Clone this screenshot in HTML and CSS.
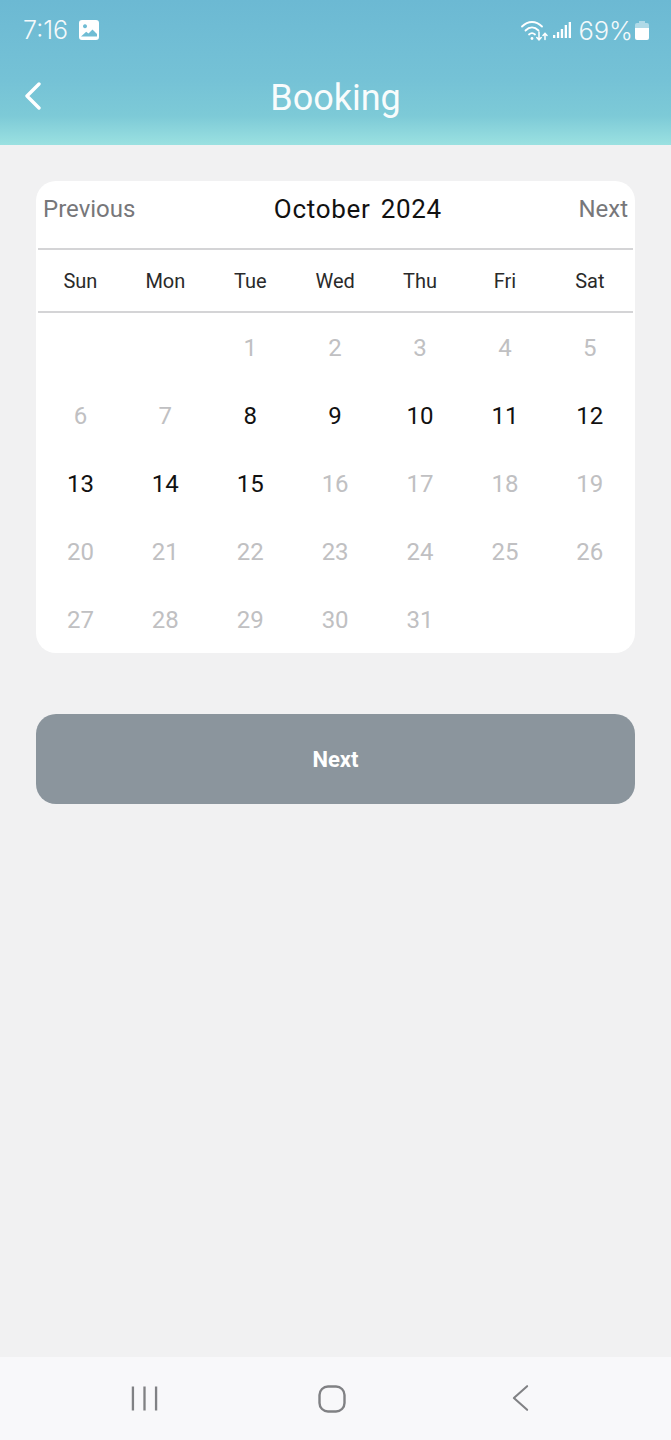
FILE: index.html
```html
<!DOCTYPE html>
<html lang="en">
<head>
<meta charset="utf-8">
<title>Booking</title>
<link rel="stylesheet" href="styles.css">
</head>
<body>
<div class="screen">
  <header class="app-header">
    <div class="status-bar">
      <div class="status-left">
        <span class="clock">7:16</span>
        <svg class="ic-photo" viewBox="0 0 20 20"><path fill="#fff" fill-rule="evenodd" d="M3 0h14a3 3 0 0 1 3 3v14a3 3 0 0 1-3 3H3a3 3 0 0 1-3-3V3a3 3 0 0 1 3-3zM6 4.200a2 2 0 1 0 .01 0zM2 16.500h16v-2.500l-4.500-4.500-4 4-2.300-1.800z"/></svg>
      </div>
      <div class="status-right">
        <svg class="ic-wifi" viewBox="0 0 28 21" fill="none" stroke="#fff" stroke-linecap="round"><path stroke-width="1.800" d="M1 6.500C7 .5 15 .5 21 6.500"/><path stroke-width="1.800" d="M4.500 10.500C8.500 6.500 13.500 6.500 17.500 10.500"/><path stroke-width="1.800" d="M8 14.500c2-1.800 4-1.800 6 0"/><circle cx="11" cy="18.500" r="1.400" fill="#fff" stroke="none"/><path stroke-width="1.500" d="M18 12v7.500M15.800 17.500l2.200 2.400 2.200-2.400M24 19.500v-6M22 15.500l2-2.200 2 2.200"/></svg>
        <svg class="ic-signal" viewBox="0 0 18 18" fill="#fff"><rect x="0" y="14" width="2.300" height="3"/><rect x="3.900" y="11" width="2.300" height="6"/><rect x="7.800" y="8" width="2.300" height="9"/><rect x="11.700" y="4" width="2.300" height="13"/><rect x="15.700" y="1" width="2.300" height="16"/></svg>
        <span class="battery-text">69%</span>
        <svg class="ic-battery" viewBox="0 0 14 19"><path fill="#fff" opacity=".45" d="M4 0h6v2h2a2 2 0 0 1 2 2v3H0V4a2 2 0 0 1 2-2h2z"/><path fill="#fff" d="M0 7h14v10a2 2 0 0 1-2 2H2a2 2 0 0 1-2-2z"/></svg>
      </div>
    </div>
    <div class="title-bar">
      <svg class="ic-back" viewBox="0 0 18 28" fill="none" stroke="#fff" stroke-width="3.400" stroke-linecap="round" stroke-linejoin="round"><path d="M15 2 3 14l12 12"/></svg>
      <h1 class="title">Booking</h1>
    </div>
  </header>

  <main class="content">
    <section class="calendar">
      <div class="cal-head">
        <span class="cal-link">Previous</span>
        <span class="cal-month">October 2024</span>
        <span class="cal-link">Next</span>
      </div>
      <div class="cal-grid cal-weekdays">
        <span>Sun</span><span>Mon</span><span>Tue</span><span>Wed</span><span>Thu</span><span>Fri</span><span>Sat</span>
      </div>
      <div class="cal-grid cal-days">
        <span></span><span></span><span class="off">1</span><span class="off">2</span><span class="off">3</span><span class="off">4</span><span class="off">5</span>
        <span class="off">6</span><span class="off">7</span><span>8</span><span>9</span><span>10</span><span>11</span><span>12</span>
        <span>13</span><span>14</span><span>15</span><span class="off">16</span><span class="off">17</span><span class="off">18</span><span class="off">19</span>
        <span class="off">20</span><span class="off">21</span><span class="off">22</span><span class="off">23</span><span class="off">24</span><span class="off">25</span><span class="off">26</span>
        <span class="off">27</span><span class="off">28</span><span class="off">29</span><span class="off">30</span><span class="off">31</span><span></span><span></span>
      </div>
    </section>
    <button class="next-btn" type="button">Next</button>
  </main>

  <nav class="sys-nav">
    <svg class="ic-recent" viewBox="0 0 28 28" fill="none" stroke="#808184" stroke-width="2.400"><path d="M2 1.500v25M14 1.500v25M26 1.500v25"/></svg>
    <svg class="ic-home" viewBox="0 0 28 28" fill="none" stroke="#808184" stroke-width="2.400"><rect x="1.500" y="1.500" width="25" height="25" rx="8.500"/></svg>
    <svg class="ic-sysback" viewBox="0 0 18 28" fill="none" stroke="#808184" stroke-width="2.200" stroke-linecap="round" stroke-linejoin="round"><path d="M16 1.500 2 14l14 12.500"/></svg>
  </nav>
</div>
</body>
</html>
```
FILE: styles.css
```css
* { box-sizing: border-box; }
html, body { margin: 0; padding: 0; }
body { font-family: Roboto, "Liberation Sans", sans-serif; background: #f1f1f2; }
.screen { width: 671px; height: 1440px; display: flex; flex-direction: column; overflow: hidden; }

.app-header {
  height: 145px;
  background: linear-gradient(180deg, #6cb9d3 0%, #75c2d6 55%, #7dcad7 80%, #9be1e1 100%);
  color: #fff;
  flex: none;
}
.status-bar { height: 60px; padding: 0 22px 0 23px; display: flex; align-items: center; justify-content: space-between; }
.status-left { display: flex; align-items: center; gap: 11px; }
.clock { font-family: "Inter", Roboto, sans-serif; font-size: 25px; font-weight: 300; opacity: .92; }
.ic-photo { width: 20px; height: 20px; }
.status-right { display: flex; align-items: center; }
.ic-wifi { width: 28px; height: 21px; margin-right: 4px; }
.ic-signal { width: 18px; height: 18px; margin-right: 7px; }
.battery-text { font-family: "Inter", Roboto, sans-serif; font-size: 25.500px; font-weight: 300; margin-right: 2px; opacity: .92; }
.ic-battery { width: 14px; height: 19px; }

.title-bar { height: 76px; position: relative; display: flex; align-items: center; justify-content: center; }
.title { margin: 0; font-size: 36px; font-weight: 400; line-height: 76px; opacity: .95; }
.ic-back { position: absolute; left: 24px; top: 22px; width: 18px; height: 28px; }

.content { flex: 1; padding: 36px 36px 0; display: flex; flex-direction: column; }
.calendar { background: #fff; border-radius: 20px; height: 472px; flex: none; padding: 0 2px; }
.cal-head { height: 69px; padding: 0 5px 11px; display: flex; align-items: center; justify-content: space-between; border-bottom: 2px solid #d4d4d6; }
.cal-link { font-size: 24px; font-weight: 400; color: #77777a; }
.cal-month { font-size: 26px; font-weight: 400; color: #111; letter-spacing: .7px; word-spacing: 3px; margin-left: 2px; }
.cal-grid { display: grid; grid-template-columns: repeat(7, 84.900px); text-align: center; }
.cal-weekdays { height: 63px; align-items: center; font-size: 20px; font-weight: 400; color: #2a2a2a; border-bottom: 2px solid #d4d4d6; padding-top: 1px; }
.cal-days { grid-auto-rows: 68px; align-items: center; font-size: 24px; font-weight: 400; color: #111; padding-top: 1px; }
.cal-days .off { color: #c0c0c2; }

.next-btn {
  margin-top: 61px; height: 90px; width: 599px; flex: none;
  background: #8b959d; color: #fff; border: 0; border-radius: 20px;
  font: 700 22px Roboto, "Liberation Sans", sans-serif;
}

.sys-nav { height: 83px; flex: none; background: #f8f8fa; position: relative; display: block; }
.ic-recent { position: absolute; left: 131px; top: 28px; width: 27px; height: 27px; }
.ic-home { position: absolute; left: 318px; top: 28px; width: 28px; height: 28px; }
.ic-sysback { position: absolute; left: 512px; top: 27px; width: 17px; height: 28px; }
```
